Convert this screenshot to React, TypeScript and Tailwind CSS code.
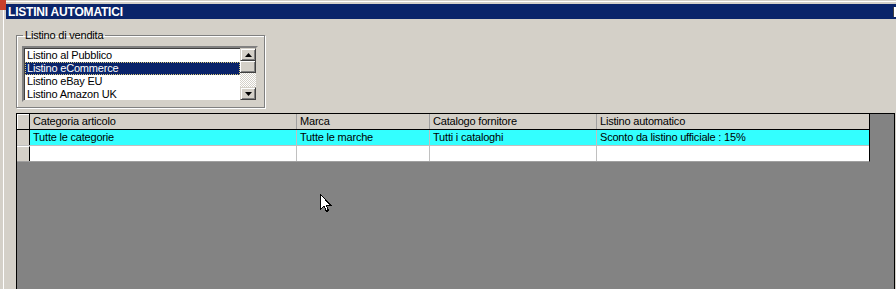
import React from 'react';

const FONT = "font-['Liberation_Sans',Arial,sans-serif]";

const listItems = ['Listino al Pubblico', 'Listino eCommerce', 'Listino eBay EU', 'Listino Amazon UK'];

const columns = [
  { title: 'Categoria articolo', width: 'w-[267px]', value: 'Tutte le categorie' },
  { title: 'Marca', width: 'w-[133px]', value: 'Tutte le marche' },
  { title: 'Catalogo fornitore', width: 'w-[167px]', value: 'Tutti i cataloghi' },
  { title: 'Listino automatico', width: 'w-[272px]', value: 'Sconto da listino ufficiale : 15%' },
];

const ScrollButton: React.FC<{ down?: boolean }> = ({ down }) => (
  <div className="w-[16px] h-[13px] bg-[#d4d0c8] border-t border-l border-t-[#d4d0c8] border-l-[#d4d0c8] border-r border-b border-r-[#404040] border-b-[#404040] shadow-[inset_1px_1px_0_#fff,inset_-1px_-1px_0_#808080] flex items-center justify-center">
    <svg width="7" height="4" viewBox="0 0 7 4">
      {down ? <polygon points="0,0 7,0 3.5,4" fill="#000" /> : <polygon points="0,4 7,4 3.5,0" fill="#000" />}
    </svg>
  </div>
);

const App: React.FC = () => {
  return (
    <div className={`w-[896px] h-[289px] bg-[#d4d0c8] overflow-hidden relative flex ${FONT} text-[11px] tracking-[-0.2px] text-black`}>
      {/* window behind, left edge */}
      <div className="w-[6px] flex flex-col">
        <div className="h-[10px] bg-[#c8402c]" />
        <div className="flex-1 flex">
          <div className="w-[3px]" />
          <div className="w-px bg-white" />
        </div>
      </div>

      <div className="flex-1 flex flex-col">
        <div className="h-[4px] flex flex-col">
          <div className="h-px bg-[#d4d0c8]" />
          <div className="h-px bg-white" />
        </div>

        {/* Title bar */}
        <div className="h-[15px] bg-[#0a246a] flex items-center justify-between pl-[2px]">
          <span className="text-white font-bold text-[12px] leading-none">LISTINI AUTOMATICI</span>
          <div className="w-[3px] h-[10px] bg-white border-l border-[#404040]" />
        </div>

        <div className="flex-1 flex flex-col pl-[10px]">
          {/* Group box */}
          <fieldset className="mt-[10px] w-[249px] h-[79px] border border-[#808080] shadow-[inset_1px_1px_0_#fff,1px_1px_0_#fff] px-[5px] pb-[5px]">
            <legend className="ml-[1px] px-[2px] leading-[12px]">Listino di vendita</legend>
            <div className="mt-[5px] w-[236px] h-[56px] border-2 border-t-[#808080] border-l-[#808080] border-r-[#d4d0c8] border-b-[#d4d0c8] shadow-[inset_1px_1px_0_#404040] bg-white flex">
              <div className="flex-1 pl-[1px] pt-px flex flex-col">
                {listItems.map((item, i) => (
                  <div
                    key={item}
                    className={`h-[13px] leading-[13px] pl-[2px] ${i === 1 ? 'bg-[#0a246a] text-white outline outline-1 outline-dotted outline-[#d8c878] -outline-offset-1' : ''}`}
                  >
                    {item}
                  </div>
                ))}
              </div>
              <div className="w-[16px] flex flex-col">
                <ScrollButton />
                <div className="h-[12px] bg-[#d4d0c8] border-r border-b border-[#404040] shadow-[inset_1px_1px_0_#fff,inset_-1px_-1px_0_#808080]" />
                <div className="flex-1 bg-[repeating-conic-gradient(#d4d0c8_0_25%,#ffffff_0_50%)] bg-[length:2px_2px]" />
                <ScrollButton down />
              </div>
            </div>
          </fieldset>

          {/* Grid */}
          <div className="mt-[5px] w-[879px] flex-1 bg-[#838383] border-t border-l border-r border-black">
            <div className="w-[853px] bg-white border-r border-black border-b border-b-[#a0a0a0]">
              {/* Header */}
              <div className="flex h-[16px] bg-[#d4d0c8] border-b border-black">
                <div className="w-[13px] border-r border-black shadow-[inset_1px_1px_0_#fff]" />
                {columns.map((c, i) => (
                  <div
                    key={c.title}
                    className={`${c.width} pl-[3px] leading-[15px] ${i < columns.length - 1 ? 'border-r border-[#a0a0a0]' : ''}`}
                  >
                    {c.title}
                  </div>
                ))}
              </div>
              {/* Row 1 */}
              <div className="flex h-[16px] border-b border-[#c0c0c0]">
                <div className="w-[13px] bg-[#d4d0c8] border-r border-black" />
                {columns.map((c, i) => (
                  <div
                    key={c.title}
                    className={`${c.width} pl-[3px] leading-[15px] bg-[#33ffff] ${i < columns.length - 1 ? 'border-r border-[#c0c0c0]' : ''}`}
                  >
                    {c.value}
                  </div>
                ))}
              </div>
              {/* Row 2 */}
              <div className="flex h-[15px]">
                <div className="w-[13px] bg-[#d4d0c8] border-r border-black border-t border-t-white" />
                {columns.map((c, i) => (
                  <div key={c.title} className={`${c.width} ${i < columns.length - 1 ? 'border-r border-[#c0c0c0]' : ''}`} />
                ))}
              </div>
            </div>
          </div>
        </div>
      </div>

      {/* mouse pointer */}
      <svg className="absolute left-[320px] top-[194px]" width="12" height="19" viewBox="0 0 12 19" shapeRendering="crispEdges">
        <path d="M0.5 0.5 L0.5 15.5 L4 12 L6.5 17.5 L8.5 16.5 L6 11 L10.5 11 Z" fill="#fff" stroke="#000" strokeWidth="1" />
      </svg>
    </div>
  );
};

export default App;
